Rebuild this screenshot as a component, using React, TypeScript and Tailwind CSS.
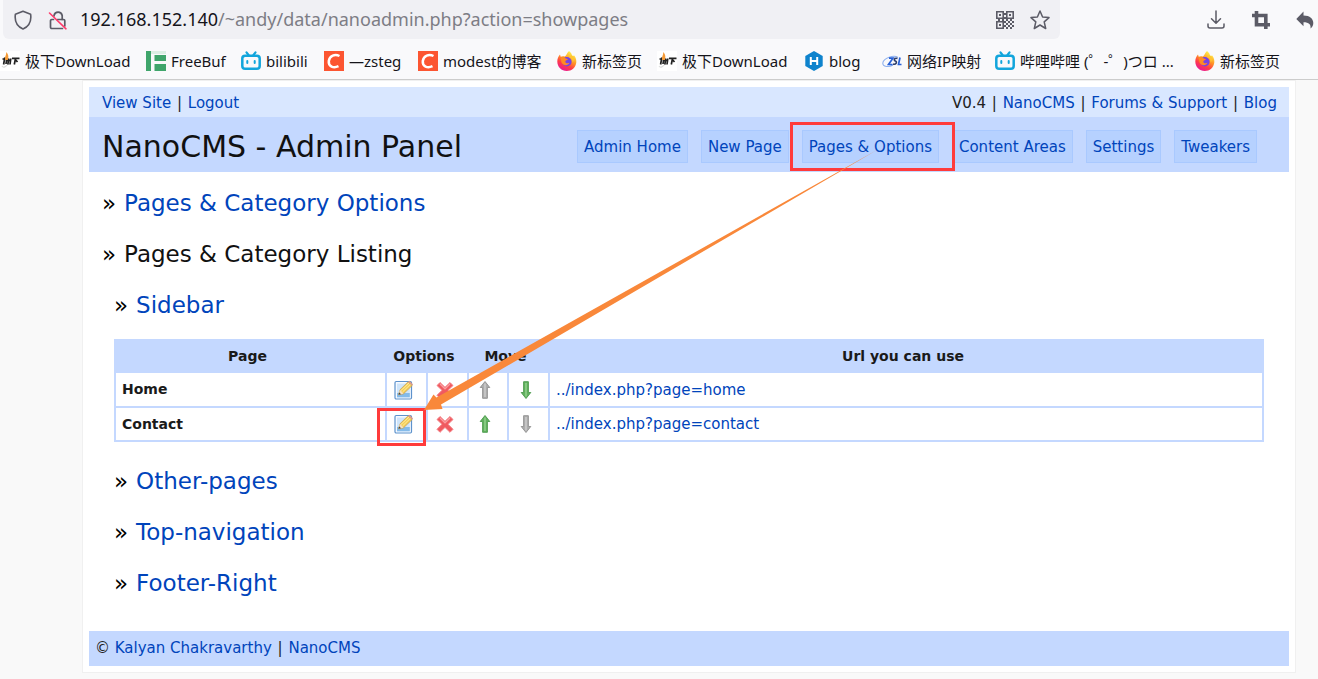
import React from 'react';

const LINK = 'text-[#0044bb] hover:underline';

function ShieldIcon() {
  return (
    <svg width="20" height="20" viewBox="0 0 20 20" fill="none" stroke="#5b5b66" strokeWidth="1.6" strokeLinejoin="round">
      <path d="M10 1.2 17.6 4.2C18.6 11 16 16.300 10 19 4 16.300 1.400 11 2.400 4.200Z" />
    </svg>
  );
}

function InsecureLockIcon() {
  return (
    <svg width="20" height="20" viewBox="0 0 20 20" fill="none" strokeLinecap="round">
      <g stroke="#5b5b66" strokeWidth="1.7">
        <path d="M6 6V5.500A4.200 4.200 0 0 1 14.200 5.500V9.500" />
        <path d="M5.500 9.500H3.800A1.300 1.300 0 0 0 2.500 10.800V17.200A1.300 1.300 0 0 0 3.800 18.500H14.500M9.500 9.500H15.500A1.300 1.300 0 0 1 16.800 10.800V16" />
      </g>
      <path d="M1.500 3 18 18.800" stroke="#ff3b6b" strokeWidth="1.6" />
    </svg>
  );
}

function QrIcon() {
  return (
    <svg width="18" height="18" viewBox="0 0 18 18" fill="#5b5b66">
      <path fillRule="evenodd" d="M0 0H8V8H0ZM1.600 1.600V6.400H6.400V1.600ZM10 0H18V8H10ZM11.600 1.600V6.400H16.400V1.600ZM0 10H8V18H0ZM1.600 11.600V16.400H6.400V11.600Z" />
      <path d="M3 3H5V5H3ZM13 3H15V5H13ZM3 13H5V15H3ZM8 2H10V4H8ZM8 6H10V8H8ZM2 8H4V10H2ZM6 8H8V10H6ZM10 8H12V10H10ZM14 8H16V10H14ZM8 10H10V12H8ZM12 10H14V12H12ZM16 10H18V12H16ZM10 12H12V14H10ZM14 12H16V14H14ZM8 14H10V16H8ZM12 14H14V16H12ZM16 14H18V16H16ZM10 16H12V18H10ZM14 16H16V18H14Z" />
    </svg>
  );
}

function StarIcon() {
  return (
    <svg width="20" height="20" viewBox="0 0 20 20" fill="none" stroke="#5b5b66" strokeWidth="1.5" strokeLinejoin="round">
      <path d="M10 1 12.600 7 19 7.600 14.200 11.900 15.700 18.500 10 15 4.300 18.500 5.800 11.900 1 7.600 7.400 7Z" />
    </svg>
  );
}

function DownloadIcon() {
  return (
    <svg width="20" height="20" viewBox="0 0 20 20" fill="none" stroke="#5b5b66" strokeWidth="1.500" strokeLinecap="round" strokeLinejoin="round">
      <path d="M10 1V13M5.500 8.700 10 13.200 14.500 8.700M2 14V16A2 2 0 0 0 4 18H16A2 2 0 0 0 18 16V14" />
    </svg>
  );
}

function CropIcon() {
  return (
    <svg width="18" height="18" viewBox="0 0 18 18" fill="none" stroke="#5b5b66" strokeWidth="3.600">
      <path d="M0 4.500H13.800V18M4.500 0V13.800H18" />
    </svg>
  );
}

function UndoIcon() {
  return (
    <svg width="18" height="18" viewBox="0 0 18 18" fill="#5b5b66">
      <path d="M7.500 0.500V4.500C14 4.500 17.300 8 17.300 12 17.300 14.500 16.200 16.200 14.500 17.500 15.200 13.500 13 11.200 7.500 11.200V15.200L0.300 7.900Z" />
    </svg>
  );
}

function JixiaIcon() {
  return (
    <svg width="20" height="20" viewBox="0 0 20 20" fill="none">
      <path fill="#fff" d="M0 0H20V20H0Z" />
      <path d="M2 15C3.500 17.500 6 15.500 8 13" stroke="#ddd" strokeWidth="1.200" />
      <path d="M2.500 8H5M4.800 6.500 3.600 13.500M6.800 7.500 6 13M8.800 7.500 7.800 13.500M10.800 7.500 10 13.500M7 9.500H10" stroke="#222" strokeWidth="1.700" />
      <path d="M12 7.300H19.500M15.500 7.500 14.300 13.500M15.800 9 17.500 11" stroke="#222" strokeWidth="1.700" />
      <path d="M5.300 9C4.200 6 6.500 4.500 6.200 1 8.500 3.500 8.900 5.500 7.800 9Z" fill="#f59a35" />
    </svg>
  );
}

function FreeBufIcon() {
  return (
    <svg width="20" height="20" viewBox="0 0 20 20">
      <path fill="#3fa56b" d="M0 0H5V20H0ZM8.500 4H20V10H8.500ZM8.500 13H20V20H8.500Z" />
      <path fill="#dceee4" d="M5 0H20V3H5Z" />
    </svg>
  );
}

function BilibiliIcon() {
  return (
    <svg width="20" height="20" viewBox="0 0 20 20" fill="none" stroke="#12a5dc" strokeLinecap="round">
      <path d="M5.500 1.300 7.500 4M14.500 1.300 12.500 4" strokeWidth="2.200" />
      <rect x="1.300" y="4.800" width="17.400" height="13" rx="2.800" strokeWidth="2.500" />
      <path d="M6.300 10V12M13.700 10V12" strokeWidth="2" />
    </svg>
  );
}

function CsdnIcon() {
  return (
    <svg width="20" height="20" viewBox="0 0 20 20" fill="none">
      <path fill="#fc5531" d="M0 0H20V20H0Z" />
      <path d="M15.500 5C11 2.800 5.500 4.500 4.800 10 4.200 15.500 9.500 17.500 14.500 15.200" stroke="#fff" strokeWidth="2.500" />
    </svg>
  );
}

function FirefoxIcon({ id }: { id: string }) {
  return (
    <svg width="20" height="20" viewBox="0 0 20 20">
      <defs>
        <linearGradient id={id} x1="0.850" y1="0" x2="0.300" y2="1">
          <stop offset="0.100" stopColor="#fff04a" />
          <stop offset="0.450" stopColor="#ff9526" />
          <stop offset="0.720" stopColor="#ff3b47" />
          <stop offset="1" stopColor="#e6169b" />
        </linearGradient>
      </defs>
      <path fill={`url(#${id})`} d="M12 0C14 1.500 14.800 3 15 4.500 16 4.800 17 5 17.200 4.500 19 7 19.500 9.300 19.300 11.500 18.700 16.500 14.700 20 9.800 20 4.500 20 .3 16 .3 10.500 .3 7.500 1.300 5.500 3 3.500L3.700 5.700C5 5 6.500 5 7.500 5.500 9.500 5 9.500 2.500 12 0Z" />
      <circle cx="9.900" cy="10.700" r="4.700" fill="#7542e5" />
      <path fill="#ff8a22" d="M3.500 6.300C5.500 5.500 7.500 6 8.800 7.500L11 8C10.500 9.300 8.500 9.200 8.300 10.400 8.300 12.500 11 12.500 12.500 11.800 11 15.500 5.500 14.500 4.500 11.500Z" />
      <path fill="#ffc531" d="M11.500 6C14.500 6.500 16 9 15.500 11.800 18 9 17 6 14.300 4.300Z" />
    </svg>
  );
}

function HexoIcon() {
  return (
    <svg width="20" height="20" viewBox="0 0 20 20" fill="none">
      <path fill="#0e83cd" d="M10 0 18.700 5V15L10 20 1.300 15V5Z" />
      <path d="M6.800 6V14M13.200 6V14M7 10H13" stroke="#fff" strokeWidth="2" />
    </svg>
  );
}

function ZslIcon() {
  return (
    <svg width="20" height="20" viewBox="0 0 20 20" fill="none">
      <path d="M16 6.500C12 3.500 1.500 7 .8 12 .5 16 7 16.500 11 14" stroke="#8fb1ee" strokeWidth="1.100" />
      <path d="M7 7.200H11L6.500 13.500H10.500M18 6.500 16.500 13.500H19.500" stroke="#2660d8" strokeWidth="1.700" />
      <path d="M15.500 7.500C12 6.500 11.500 9.500 13.500 10 15.500 11 14 14 11 13" stroke="#2e3d69" strokeWidth="1.600" />
    </svg>
  );
}

function EditIcon() {
  return (
    <svg width="20" height="20" viewBox="0 0 20 20">
      <rect x="1" y="1.500" width="16.500" height="17.500" rx="1.200" fill="#f6faff" stroke="#5d92cc" strokeWidth="1.200" />
      <path fill="#cfe5fa" d="M3 3.500H15.800V17.300H3Z" />
      <path fill="#84bbea" d="M3 13H15.800V17.300H3Z" />
      <path d="M4.500 14.800 6 9.800 14 1.900 18.200 5.500 9.500 13.800Z" fill="#f4cd59" stroke="#c19a4a" strokeWidth=".7" />
      <path d="M7 10.500 15 3M8.500 12 16.500 4.300" stroke="#fff0a2" strokeWidth=".9" />
      <path d="M4.500 14.800 6 9.800 9.500 13.800Z" fill="#f3dfc2" />
      <path d="M4.500 14.800 5.200 12.300 7 14.300Z" fill="#444" />
      <path d="M14 1.900 15.500 .8 19 4.500 18.200 5.500Z" fill="#dc9a87" />
    </svg>
  );
}

function DeleteIcon() {
  return (
    <svg width="20" height="20" viewBox="0 0 20 20">
      <path d="M5 2.500 10 7.300 15 2.500 18 5.500 13 10.300 18 15.300 15 18.300 10 13.400 5 18.300 2 15.300 7 10.300 2 5.500Z" fill="#f05a60" stroke="#f48186" strokeWidth="1" strokeLinejoin="round" />
      <path d="M5 4 10 8.800 15 4" fill="none" stroke="#fa9da0" strokeWidth="1.200" />
    </svg>
  );
}

function ArrowIcon({ up = false, active = false }: { up?: boolean; active?: boolean }) {
  return (
    <svg width="20" height="20" viewBox="0 0 20 20" className={up ? '' : 'rotate-180'}>
      <path
        d="M10 1.500 14.800 7.500H12.400V18.300H7.600V7.500H5.200Z"
        fill={active ? '#62b05f' : '#adadad'}
        stroke={active ? '#4a9a4b' : '#909090'}
        strokeWidth=".9"
        strokeLinejoin="round"
      />
      <path d="M10 3.500V17" stroke={active ? '#96d490' : '#cfcfcf'} strokeWidth="1.400" />
    </svg>
  );
}

const bookmarks: { label: string; icon: React.ReactNode; width: string }[] = [
  { label: '极下DownLoad', icon: <JixiaIcon />, width: 'w-[146px]' },
  { label: 'FreeBuf', icon: <FreeBufIcon />, width: 'w-[95px]' },
  { label: 'bilibili', icon: <BilibiliIcon />, width: 'w-[83px]' },
  { label: '—zsteg', icon: <CsdnIcon />, width: 'w-[94px]' },
  { label: 'modest的博客', icon: <CsdnIcon />, width: 'w-[139px]' },
  { label: '新标签页', icon: <FirefoxIcon id="tab-flame-a" />, width: 'w-[100px]' },
  { label: '极下DownLoad', icon: <JixiaIcon />, width: 'w-[147px]' },
  { label: 'blog', icon: <HexoIcon />, width: 'w-[78px]' },
  { label: '网络IP映射', icon: <ZslIcon />, width: 'w-[113px]' },
  { label: '哔哩哔哩 (゜-゜)つロ ...', icon: <BilibiliIcon />, width: 'w-[200px]' },
  { label: '新标签页', icon: <FirefoxIcon id="tab-flame-b" />, width: 'w-[90px]' },
];

function BrowserChrome() {
  return (
    <header className="h-20 overflow-hidden border-b border-[#cccccc] bg-[#f9f9fb] font-['Noto_Sans','Noto_Sans_CJK_SC',sans-serif] text-[#15141a]">
      <div className="flex h-[39px] items-center pl-[3px]">
        <div className="flex h-full min-w-0 flex-1 items-center rounded-b-md bg-[#f0f0f4] px-2.5">
          <button aria-label="Tracking protection" className="mr-[15px]"><ShieldIcon /></button>
          <button aria-label="Connection not secure" className="mr-3"><InsecureLockIcon /></button>
          <div className="min-w-0 flex-1 truncate text-[18px]">
            192.168.152.140<span className="text-[#7d7d85]">/~andy/data/nanoadmin.php?action=showpages</span>
          </div>
          <button aria-label="QR code" className="mr-4"><QrIcon /></button>
          <button aria-label="Bookmark this page"><StarIcon /></button>
        </div>
        <div className="flex w-[258px] items-center justify-end gap-[26px] pr-1">
          <button aria-label="Downloads"><DownloadIcon /></button>
          <button aria-label="Screenshot"><CropIcon /></button>
          <button aria-label="Undo"><UndoIcon /></button>
        </div>
      </div>
      <nav aria-label="Bookmarks" className="flex h-10 items-center pt-1 text-[15px]">
        {bookmarks.map((b, i) => (
          <a key={i} href="#" className={`flex shrink-0 items-center gap-[5px] whitespace-nowrap ${b.width}`}>
            <span className="shrink-0">{b.icon}</span>
            {b.label}
          </a>
        ))}
      </nav>
    </header>
  );
}

const navItems = ['Admin Home', 'New Page', 'Pages & Options', 'Content Areas', 'Settings', 'Tweakers'];

function Bar() {
  return <span className="mx-px">|</span>;
}

function SectionTitle({ children, plain = false }: { children: string; plain?: boolean }) {
  return (
    <h2 className="flex h-[51px] items-center gap-2 text-[23px] text-black">
      <span>»</span>
      {plain ? <span className="text-[#111]">{children}</span> : <a href="#" className={LINK}>{children}</a>}
    </h2>
  );
}

const rows = [
  { page: 'Home', url: '../index.php?page=home', canUp: false, canDown: true },
  { page: 'Contact', url: '../index.php?page=contact', canUp: true, canDown: false },
];

function PagesTable() {
  const iconButton = 'flex h-8 w-full items-center justify-center pr-1.5';
  return (
    <table className="mt-2 w-full table-fixed border-separate border-spacing-x-0.5 border-spacing-y-0 border-b-2 border-[#c4d8ff] bg-[#c4d8ff] text-[15px] text-[#1a1a1a]">
      <colgroup>
        <col className="w-[269px]" />
        <col className="w-[39px]" />
        <col className="w-[39px]" />
        <col className="w-[38px]" />
        <col className="w-[39px]" />
        <col />
      </colgroup>
      <thead>
        <tr className="h-[34px] text-[14px]">
          <th className="pr-1.5">Page</th>
          <th colSpan={2} className="pr-1.5">Options</th>
          <th colSpan={2} className="pr-1.5">Move</th>
          <th className="pr-1.5">Url you can use</th>
        </tr>
      </thead>
      <tbody>
        {rows.map((r, i) => {
          const cell = i === 0 ? 'bg-white p-0' : 'border-t-2 border-[#c4d8ff] bg-white p-0';
          return (
            <tr key={r.page} className={i === 0 ? 'h-[33px]' : 'h-[34px]'}>
              <th scope="row" className={`${cell} text-left text-[14px]`}><span className="pl-1.5">{r.page}</span></th>
              <td className={cell}><button aria-label={`Edit ${r.page}`} className={iconButton}><EditIcon /></button></td>
              <td className={cell}><button aria-label={`Delete ${r.page}`} className={iconButton}><DeleteIcon /></button></td>
              <td className={cell}><button aria-label={`Move ${r.page} up`} className={iconButton}><ArrowIcon up active={r.canUp} /></button></td>
              <td className={cell}><button aria-label={`Move ${r.page} down`} className={iconButton}><ArrowIcon active={r.canDown} /></button></td>
              <td className={`${cell} pt-px`}><a href="#" className={`pl-1.5 ${LINK}`}>{r.url}</a></td>
            </tr>
          );
        })}
      </tbody>
    </table>
  );
}

function Annotations() {
  return (
    <svg className="pointer-events-none absolute top-0 left-0" width="1318" height="679" viewBox="0 0 1318 679" fill="none" aria-hidden="true">
      <rect x="791.500" y="123.500" width="162" height="46" stroke="#ff3b3b" strokeWidth="3" />
      <rect x="378.500" y="409.500" width="46" height="35" stroke="#ff3b3b" strokeWidth="3" />
      <path fill="#f9883a" d="M877 150 441 404.500 442.500 409 424 410 433.500 394.500 436.500 397.500Z" />
    </svg>
  );
}

export default function App() {
  return (
    <div className="relative min-h-screen overflow-x-hidden bg-[#f9f9f9]">
      <BrowserChrome />
      <div className="mr-[22px] ml-[82px] border border-[#f0f0f0] bg-white p-1.5 font-['DejaVu_Sans',Verdana,sans-serif] text-[15px] text-[#222]">
        <div className="flex h-[30px] items-center justify-between bg-[#d9e7ff] pt-0.5 pr-3 pl-[13px]">
          <div><a href="#" className={LINK}>View Site</a> <Bar /> <a href="#" className={LINK}>Logout</a></div>
          <div>
            V0.4 <Bar /> <a href="#" className={LINK}>NanoCMS</a> <Bar /> <a href="#" className={LINK}>Forums &amp; Support</a> <Bar /> <a href="#" className={LINK}>Blog</a>
          </div>
        </div>
        <div className="flex h-[55px] items-center justify-between bg-[#c4d8ff] pt-1 pr-8 pl-[13px]">
          <h1 className="text-[30px] text-[#111]">NanoCMS - Admin Panel</h1>
          <nav aria-label="Admin" className="flex gap-[13px]">
            {navItems.map((n) => (
              <a key={n} href="#" className="flex h-[33px] items-center border border-[#a9c9ff] bg-[#b6d1ff] px-1.5 pt-0.5 whitespace-nowrap text-[#0044bb]">{n}</a>
            ))}
          </nav>
        </div>
        <main className="pt-1.5 pr-[25px] pb-[22px] pl-[13px]">
          <SectionTitle>Pages &amp; Category Options</SectionTitle>
          <SectionTitle plain>Pages &amp; Category Listing</SectionTitle>
          <div className="pl-3">
            <SectionTitle>Sidebar</SectionTitle>
            <PagesTable />
            <div className="pt-3.5">
              <SectionTitle>Other-pages</SectionTitle>
              <SectionTitle>Top-navigation</SectionTitle>
              <SectionTitle>Footer-Right</SectionTitle>
            </div>
          </div>
        </main>
        <footer className="flex h-[35px] items-center bg-[#c4d8ff] pl-1.5">
          <p>© <a href="#" className={LINK}>Kalyan Chakravarthy</a> <Bar /> <a href="#" className={LINK}>NanoCMS</a></p>
        </footer>
      </div>
      <Annotations />
    </div>
  );
}
